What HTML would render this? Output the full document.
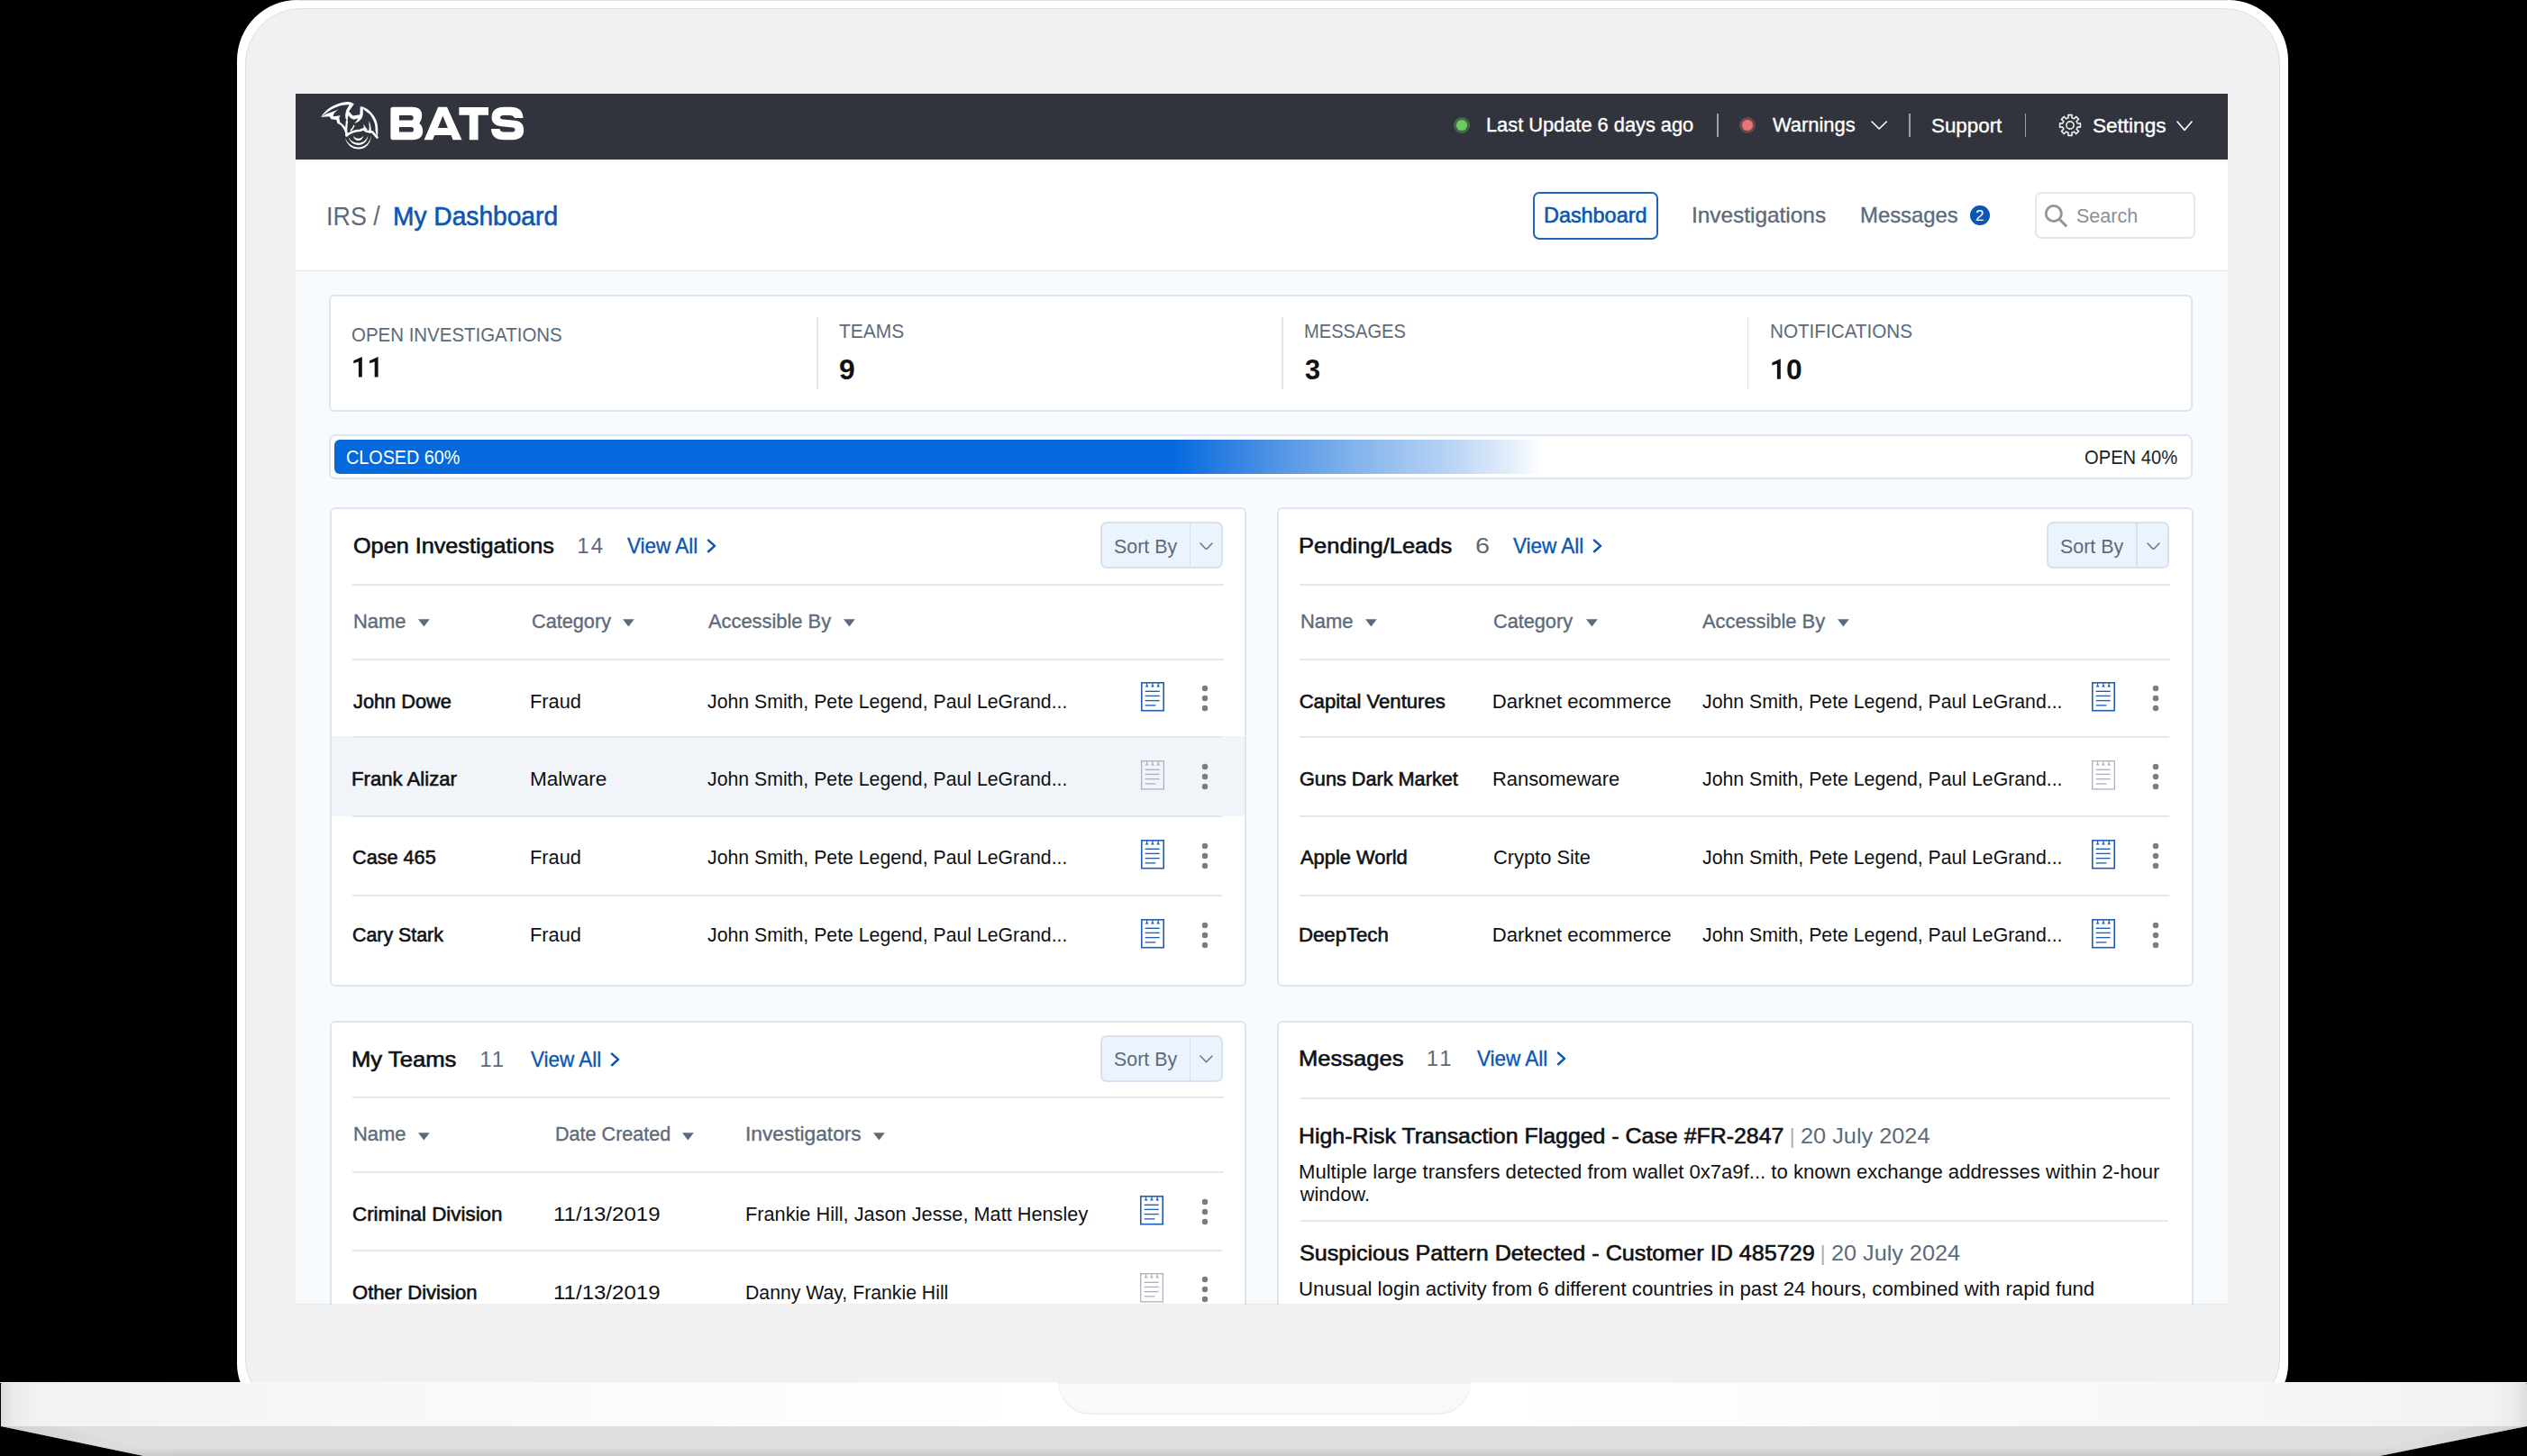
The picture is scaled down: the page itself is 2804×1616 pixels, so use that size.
<!DOCTYPE html>
<html><head><meta charset="utf-8"><title>BATS Dashboard</title>
<style>
html,body{margin:0;padding:0;background:#000;width:2804px;height:1616px;overflow:hidden;font-family:"Liberation Sans",sans-serif}
body{position:relative}
.a{position:absolute}
.t{position:absolute;white-space:pre;transform-origin:0 0;font-family:"Liberation Sans",sans-serif;font-weight:400}
</style></head><body>

<div class="a" style="left:263px;top:0px;width:2276px;height:1571px;background:#ffffff;border-radius:67px 67px 57px 57px"></div>
<div class="a" style="left:330px;top:0px;width:2142px;height:1px;background:#e0e0e0"></div>
<div class="a" style="left:272px;top:9px;width:2258px;height:1552px;box-sizing:border-box;background:#f1f1f1;border:1px solid #dedede;border-radius:62px 62px 52px 52px"></div>
<div class="a" style="left:1px;top:1534px;width:2803px;height:49px;background:linear-gradient(90deg,#dcdcdc 0%,#ebebeb 0.5%,#f2f2f2 1.4%,#f5f5f5 8%,#fbfbfb 25%,#ffffff 40%,#ffffff 60%,#fbfbfb 75%,#f5f5f5 92%,#f2f2f2 98.6%,#ebebeb 99.5%,#dcdcdc 100%);border-radius:3px 3px 0 0"></div>
<div class="a" style="left:0;top:1534px;width:2804px;height:1px;background:#fafafa"></div>
<svg class="a" style="left:0;top:1583px" width="2804" height="33" viewBox="0 0 2804 33"><defs><linearGradient id="bg1" x1="0" y1="0" x2="0" y2="1"><stop offset="0" stop-color="#dedede"/><stop offset="0.7" stop-color="#dfdfdf"/><stop offset="1" stop-color="#c9c9c9"/></linearGradient></defs><defs><linearGradient id="bgL" x1="0" y1="0" x2="1" y2="0"><stop offset="0" stop-color="#c4c4c4"/><stop offset="1" stop-color="#dedede" stop-opacity="0"/></linearGradient><linearGradient id="bgR" x1="1" y1="0" x2="0" y2="0"><stop offset="0" stop-color="#c4c4c4"/><stop offset="1" stop-color="#dedede" stop-opacity="0"/></linearGradient></defs><path d="M1 0 H2804 L2641 33 H159 Z" fill="url(#bg1)"/><path d="M1 0 L60 0 L200 33 L159 33 Z" fill="url(#bgL)" opacity="0.5"/><path d="M2804 0 L2744 0 L2604 33 L2641 33 Z" fill="url(#bgR)" opacity="0.5"/></svg>
<div class="a" style="left:1174px;top:1534px;width:458px;height:36px;background:#f9f9f9;border-radius:0 0 40px 40px;box-shadow:inset 0 -1px 2px rgba(0,0,0,0.08), inset 0 4px 3px -3px rgba(0,0,0,0.06)"></div>
<div class="a" style="left:0;top:0;width:2804px;height:1448px;overflow:hidden">
<div class="a" style="left:328px;top:104px;width:2144px;height:1344px;background:#f8fbfd"></div>
<div class="a" style="left:328px;top:104px;width:2144px;height:73px;background:#31343d"></div>
<div class="a" style="left:328px;top:177px;width:2144px;height:123px;background:#ffffff"></div>
<div class="a" style="left:328px;top:300px;width:2144px;height:1px;background:#dde5ef"></div>
<div class="a" style="left:328px;top:177px;width:2144px;height:1px;background:#e4e9f0"></div>
<svg class="a" style="left:328px;top:104px" width="300" height="73" viewBox="328 104 300 73">
<g fill="#ffffff">
<path d="M356.16,129.95 C361,122 370,114.5 385.25,113.0 C388.5,112.8 391,113.8 392.94,115.29 L387.65,116.25 C380,115.7 369.8,118.9 362.0,125.6 Z"/>
<path d="M356.16,129.95 L365.54,129.23 L367.46,132.36 L373.23,133.08 L374.43,136.92 L378.04,138.85 L380.92,142.45 C382.4,145 383.4,147.8 384.06,150.57 L386.2,148.8 C385,145.5 383.6,142.5 382.37,140.05 L377.08,135.24 L376.36,130.43 L377.8,128.27 L369.63,129.23 C369.8,127.6 370.4,125.8 371.8,124.5 C373,123.2 374.4,122 376.0,121.3 C373,122.6 368.8,124.3 362.6,126.3 Z"/>
<path d="M392.98,115.30 L387.21,123.54 L386.80,128.07 L385.98,130.55 L385.56,134.46 L383.92,132.61 C383.2,130.5 383,128.4 383.30,126.42 C383.6,124.5 384.1,122.8 384.74,121.27 L387.83,116.12 Z"/>
<path d="M387.21,123.54 L391.54,128.48 L399.37,127.25 L399.68,117.98 L402.87,120.65 L402.67,127.66 L401.43,131.16 L398.55,134.46 L393.39,137.35 L397.31,131.58 L395.66,131.78 L392.78,132.81 L388.86,130.96 L386.80,128.07 Z"/>
<path d="M399.68,117.98 C407,119 414,125 417.5,133.5 C419.5,139 419.8,145.5 418.8,152.7 L416.6,145.4 C416.6,141 416.2,138 415.2,135.5 C413.6,131.6 412,129 410,126.6 C407.8,124.5 405.4,123.2 402.87,120.65 Z"/>
<path d="M409.2,134.2 C410.9,137 411.7,140.5 412,145.8 L409.4,145.8 C409.8,141.5 409.7,137.6 409.2,134.2 Z"/>
<path d="M403.4,137.6 C404.8,140.2 406.2,142.4 408.2,144.2 L403.8,144.6 Z"/>
<path d="M391.9,150.8 C392.6,154.5 395,156 397.7,156 C400.6,156 402.8,154 403.3,150 C402.2,152.6 400.4,153.8 397.7,153.8 C395.2,153.8 393.2,152.8 391.9,150.8 Z"/>
<path d="M386.8,152.6 C388.4,158 392.4,161 397.7,161 C403.6,161 407.8,156.8 408.5,150 C407,155.2 403,158.6 397.7,158.8 C392.8,158.8 389.2,156.4 386.8,152.6 Z"/>
<path d="M383.0,153 C384.8,160.6 390.6,165.6 397.7,165.6 C405.8,165.6 411.6,159.4 412,150 C410.8,158 405,163.4 397.7,163.4 C391,163.4 385.6,159.4 383.0,153 Z"/>
</g>
<g fill="none" stroke="#ffffff" stroke-linecap="round" stroke-linejoin="round">
<path d="M384.9,134.5 C384.2,139.5 384,145 384.3,150.2" stroke-width="2.2"/>
<path d="M392.8,139.4 C392,141.6 391,143 389.4,144.6" stroke-width="1.5"/>
<path d="M384.5,150.4 C388.5,147 393,145.2 399.8,144.8 L403.5,143.2 L406.1,145.4 L410.8,146.6 L412.8,146.2 L418.6,152.6" stroke-width="2.6"/>
</g>
<g fill="#ffffff">
<path fill-rule="evenodd" d="M433.4,121.6 Q433.4,118.8 436.2,118.8 L457.6,118.8 C465.2,118.8 468.2,122.6 468.2,128 C468.2,132.4 466.4,135.6 465.2,137 C467.4,138.4 469.2,141.4 469.2,145.6 C469.2,152 465.2,155.2 457.8,155.2 L436.2,155.2 Q433.4,155.2 433.4,152.4 Z M442.9,127.9 L455.8,127.9 Q458.7,127.9 458.7,130.75 Q458.7,133.6 455.8,133.6 L442.9,133.6 Z M442.9,140.9 L456.1,140.9 Q459,140.9 459,143.75 Q459,146.6 456.1,146.6 L442.9,146.6 Z"/>
<path fill-rule="evenodd" d="M470.6,155.2 L486.2,118.8 L496,118.8 L512.5,155.2 L502.6,155.2 L500.6,150.1 L482.3,150.1 L480.1,155.2 Z M491.3,128.6 L485.9,141.9 L496.9,141.9 Z"/>
<path d="M509.4,119 L542,119 L542,127.7 L530.6,127.7 L530.6,155.3 L520.8,155.3 L520.8,127.7 L509.4,127.7 Z"/>
<path d="M580.5,131.1 L570.9,131.1 C570.2,128.8 568.4,127.9 565.2,127.9 L558.4,127.9 C556.2,127.9 555,128.9 555,130.2 C555,131.5 556,132.3 558.2,132.5 L571.2,133.8 C578,134.5 581.2,138.2 581.2,144.4 C581.2,151.6 576.8,155.3 566.2,155.3 L559.6,155.3 C549.6,155.3 545.2,150.8 545,143 L554.5,143 C554.9,145.4 556.4,146.4 559.2,146.4 L568.6,146.4 C570.6,146.4 571.5,145.5 571.5,144.1 C571.5,142.6 570.6,141.8 568.4,141.6 L556.2,140.3 C549.2,139.6 545.6,136 545.6,130.6 C545.6,123 550.4,118.8 559.4,118.8 L566,118.8 C575.8,118.8 580.3,122.8 580.5,131.1 Z"/>
</g></svg>
<div class="a" style="left:1612.8px;top:130px;width:18px;height:18px;border-radius:50%;background:rgba(108,203,95,0.35)"></div>
<div class="a" style="left:1615.8px;top:133px;width:12px;height:12px;border-radius:50%;background:#6ccb5f"></div>
<div class="a" style="left:1929.7px;top:130px;width:18px;height:18px;border-radius:50%;background:rgba(232,112,112,0.35)"></div>
<div class="a" style="left:1932.7px;top:133px;width:12px;height:12px;border-radius:50%;background:#e87676"></div>
<div class="a" style="left:1905.2px;top:126px;width:1.6px;height:25.5px;background:#9aa1ab"></div>
<div class="a" style="left:2118.2px;top:126px;width:1.6px;height:25.5px;background:#9aa1ab"></div>
<div class="a" style="left:2246.7px;top:126px;width:1.6px;height:25.5px;background:#9aa1ab"></div>
<svg class="a" style="left:2076.1px;top:133.8px" width="18.3" height="10.0" viewBox="0 0 18.3 10.0"><path d="M1 1 L9.15 9.0 L17.3 1" fill="none" stroke="#ffffff" stroke-width="1.6" stroke-linecap="round" stroke-linejoin="round"/></svg>
<svg class="a" style="left:2415.3px;top:133.6px" width="18.0" height="11.4" viewBox="0 0 18.0 11.4"><path d="M1 1 L9.0 10.4 L17.0 1" fill="none" stroke="#ffffff" stroke-width="1.6" stroke-linecap="round" stroke-linejoin="round"/></svg>
<svg class="a" style="left:2280px;top:122px" width="34" height="34" viewBox="0 0 34 34"><path d="M15.04,8.83 L14.89,5.59 L19.11,5.59 L18.96,8.83 L21.39,9.84 L23.57,7.44 L26.56,10.43 L24.16,12.61 L25.17,15.04 L28.41,14.89 L28.41,19.11 L25.17,18.96 L24.16,21.39 L26.56,23.57 L23.57,26.56 L21.39,24.16 L18.96,25.17 L19.11,28.41 L14.89,28.41 L15.04,25.17 L12.61,24.16 L10.43,26.56 L7.44,23.57 L9.84,21.39 L8.83,18.96 L5.59,19.11 L5.59,14.89 L8.83,15.04 L9.84,12.61 L7.44,10.43 L10.43,7.44 L12.61,9.84 Z" fill="none" stroke="#ececec" stroke-width="1.6" stroke-linejoin="round"/><circle cx="17.0" cy="17.0" r="4.1" fill="none" stroke="#ececec" stroke-width="1.6"/></svg>
<div class="a" style="left:1701px;top:213px;width:139px;height:52.5px;box-sizing:border-box;border:2px solid #1f63b8;border-radius:7px"></div>
<div class="a" style="left:2185.6px;top:228px;width:22px;height:22px;border-radius:50%;background:#0b56b3"></div>
<div class="a" style="left:2258.3px;top:213.2px;width:177.4px;height:52px;box-sizing:border-box;border:2px solid #e4e8ed;border-radius:7px;background:#fff"></div>
<svg class="a" style="left:2262px;top:220px" width="38" height="38" viewBox="0 0 38 38"><circle cx="16.8" cy="17" r="8.6" fill="none" stroke="#959595" stroke-width="2.8"/><path d="M23.2 23.4 L30.2 30.4" stroke="#959595" stroke-width="2.9" stroke-linecap="round"/></svg>
<div class="a" style="left:365px;top:326.5px;width:2068px;height:130px;box-sizing:border-box;background:#fff;border:2px solid #dce5f0;border-radius:6px"></div>
<div class="a" style="left:906.2px;top:351.5px;width:1.8px;height:80.3px;background:#e4e4e6"></div>
<div class="a" style="left:1422.4px;top:351.5px;width:1.8px;height:80.3px;background:#e4e4e6"></div>
<div class="a" style="left:1938.6px;top:351.5px;width:1.8px;height:80.3px;background:#e4e4e6"></div>
<div class="a" style="left:365px;top:482px;width:2068px;height:50px;box-sizing:border-box;background:#fff;border:2px solid #dce5f0;border-radius:7px"></div>
<div class="a" style="left:371px;top:488px;width:2056px;height:37.5px;border-radius:6px;background:linear-gradient(90deg,#0569de 0%,#0569de 45.3%,#4a90e4 50.3%,#80b2ec 54.9%,#bcd6f5 60.5%,#e4eefb 63.5%,rgba(255,255,255,0) 65.2%)"></div>
<div class="a" style="left:366px;top:563px;width:1017px;height:532px;box-sizing:border-box;background:#fff;border:2px solid #dce5f0;border-radius:6px"></div>
<div class="a" style="left:391.3px;top:647.8px;width:966.3px;height:2px;background:#e1e8f1"></div>
<div class="a" style="left:391.3px;top:731px;width:966.3px;height:2px;background:#e1e8f1"></div>
<div class="a" style="left:368px;top:817px;width:1013px;height:88.5px;background:#f1f5fa"></div>
<div class="a" style="left:391.3px;top:817px;width:964.5px;height:2px;background:#e1e8f1"></div>
<div class="a" style="left:391.3px;top:905px;width:964.5px;height:2px;background:#e1e8f1"></div>
<div class="a" style="left:391.3px;top:993px;width:964.5px;height:2px;background:#e1e8f1"></div>
<div class="a" style="left:1220.8px;top:579.3px;width:136px;height:52px;box-sizing:border-box;background:#ebf4fd;border:2px solid #d7e2ee;border-radius:7px"></div>
<div class="a" style="left:1319.8px;top:580.3px;width:1.5px;height:50px;background:#d7e2ee"></div>
<svg class="a" style="left:1331.0px;top:601.5px" width="15.0" height="8.8" viewBox="0 0 15.0 8.8"><path d="M1 1 L7.5 7.8 L14.0 1" fill="none" stroke="#6b7684" stroke-width="1.5" stroke-linecap="round" stroke-linejoin="round"/></svg>
<svg class="a" style="left:783.4px;top:598.2px" width="14" height="16" viewBox="0 0 14 16"><path d="M3 1.6 L10 7.9 L3 14.2" fill="none" stroke="#0b56b3" stroke-width="2.5" stroke-linecap="round" stroke-linejoin="round"/></svg>
<svg class="a" style="left:463.9px;top:687.2px" width="14" height="9" viewBox="0 0 14 9"><path d="M0 0.2 H12.8 L6.4 8.4 Z" fill="#5d6a7a"/></svg>
<svg class="a" style="left:691.4px;top:687.2px" width="14" height="9" viewBox="0 0 14 9"><path d="M0 0.2 H12.8 L6.4 8.4 Z" fill="#5d6a7a"/></svg>
<svg class="a" style="left:935.6px;top:687.2px" width="14" height="9" viewBox="0 0 14 9"><path d="M0 0.2 H12.8 L6.4 8.4 Z" fill="#5d6a7a"/></svg>
<svg class="a" style="left:1266.3px;top:757.35px" width="27" height="34" viewBox="0 0 27 34"><rect x="0.80" y="0.80" width="24.40" height="30.90" fill="none" stroke="#1f5fb5" stroke-width="1.6"/><path d="M6.6 0.5 V4.5" stroke="#1f5fb5" stroke-width="1.1"/><path d="M4.699999999999999 5.6 L6.6 2.6 L8.5 5.6 Z" fill="#1f5fb5"/><path d="M12.9 0.5 V4.5" stroke="#1f5fb5" stroke-width="1.1"/><path d="M11.0 5.6 L12.9 2.6 L14.8 5.6 Z" fill="#1f5fb5"/><path d="M19.2 0.5 V4.5" stroke="#1f5fb5" stroke-width="1.1"/><path d="M17.3 5.6 L19.2 2.6 L21.099999999999998 5.6 Z" fill="#1f5fb5"/><path d="M4.7 10.3 H20.7" stroke="#1f5fb5" stroke-width="1.35"/><path d="M4.7 15.4 H20.7" stroke="#1f5fb5" stroke-width="1.35"/><path d="M4.7 20.6 H20.7" stroke="#1f5fb5" stroke-width="1.35"/><path d="M4.7 25.9 H16.4" stroke="#1f5fb5" stroke-width="1.35"/></svg>
<svg class="a" style="left:1332.10px;top:759.40px" width="10" height="32" viewBox="0 0 10 32"><circle cx="5" cy="5" r="3.25" fill="#797e86"/><circle cx="5" cy="16" r="3.25" fill="#797e86"/><circle cx="5" cy="27" r="3.25" fill="#797e86"/></svg>
<svg class="a" style="left:1266.3px;top:844.3px" width="27" height="34" viewBox="0 0 27 34"><rect x="0.65" y="0.65" width="24.70" height="31.20" fill="none" stroke="#a9b2bd" stroke-width="1.3"/><path d="M6.6 0.5 V4.5" stroke="#a9b2bd" stroke-width="1.1"/><path d="M4.699999999999999 5.6 L6.6 2.6 L8.5 5.6 Z" fill="#a9b2bd"/><path d="M12.9 0.5 V4.5" stroke="#a9b2bd" stroke-width="1.1"/><path d="M11.0 5.6 L12.9 2.6 L14.8 5.6 Z" fill="#a9b2bd"/><path d="M19.2 0.5 V4.5" stroke="#a9b2bd" stroke-width="1.1"/><path d="M17.3 5.6 L19.2 2.6 L21.099999999999998 5.6 Z" fill="#a9b2bd"/><path d="M4.7 10.3 H20.7" stroke="#a9b2bd" stroke-width="1.35"/><path d="M4.7 15.4 H20.7" stroke="#a9b2bd" stroke-width="1.35"/><path d="M4.7 20.6 H20.7" stroke="#a9b2bd" stroke-width="1.35"/><path d="M4.7 25.9 H16.4" stroke="#a9b2bd" stroke-width="1.35"/></svg>
<svg class="a" style="left:1332.10px;top:846.35px" width="10" height="32" viewBox="0 0 10 32"><circle cx="5" cy="5" r="3.25" fill="#797e86"/><circle cx="5" cy="16" r="3.25" fill="#797e86"/><circle cx="5" cy="27" r="3.25" fill="#797e86"/></svg>
<svg class="a" style="left:1266.3px;top:932.25px" width="27" height="34" viewBox="0 0 27 34"><rect x="0.80" y="0.80" width="24.40" height="30.90" fill="none" stroke="#1f5fb5" stroke-width="1.6"/><path d="M6.6 0.5 V4.5" stroke="#1f5fb5" stroke-width="1.1"/><path d="M4.699999999999999 5.6 L6.6 2.6 L8.5 5.6 Z" fill="#1f5fb5"/><path d="M12.9 0.5 V4.5" stroke="#1f5fb5" stroke-width="1.1"/><path d="M11.0 5.6 L12.9 2.6 L14.8 5.6 Z" fill="#1f5fb5"/><path d="M19.2 0.5 V4.5" stroke="#1f5fb5" stroke-width="1.1"/><path d="M17.3 5.6 L19.2 2.6 L21.099999999999998 5.6 Z" fill="#1f5fb5"/><path d="M4.7 10.3 H20.7" stroke="#1f5fb5" stroke-width="1.35"/><path d="M4.7 15.4 H20.7" stroke="#1f5fb5" stroke-width="1.35"/><path d="M4.7 20.6 H20.7" stroke="#1f5fb5" stroke-width="1.35"/><path d="M4.7 25.9 H16.4" stroke="#1f5fb5" stroke-width="1.35"/></svg>
<svg class="a" style="left:1332.10px;top:934.30px" width="10" height="32" viewBox="0 0 10 32"><circle cx="5" cy="5" r="3.25" fill="#797e86"/><circle cx="5" cy="16" r="3.25" fill="#797e86"/><circle cx="5" cy="27" r="3.25" fill="#797e86"/></svg>
<svg class="a" style="left:1266.3px;top:1020.25px" width="27" height="34" viewBox="0 0 27 34"><rect x="0.80" y="0.80" width="24.40" height="30.90" fill="none" stroke="#1f5fb5" stroke-width="1.6"/><path d="M6.6 0.5 V4.5" stroke="#1f5fb5" stroke-width="1.1"/><path d="M4.699999999999999 5.6 L6.6 2.6 L8.5 5.6 Z" fill="#1f5fb5"/><path d="M12.9 0.5 V4.5" stroke="#1f5fb5" stroke-width="1.1"/><path d="M11.0 5.6 L12.9 2.6 L14.8 5.6 Z" fill="#1f5fb5"/><path d="M19.2 0.5 V4.5" stroke="#1f5fb5" stroke-width="1.1"/><path d="M17.3 5.6 L19.2 2.6 L21.099999999999998 5.6 Z" fill="#1f5fb5"/><path d="M4.7 10.3 H20.7" stroke="#1f5fb5" stroke-width="1.35"/><path d="M4.7 15.4 H20.7" stroke="#1f5fb5" stroke-width="1.35"/><path d="M4.7 20.6 H20.7" stroke="#1f5fb5" stroke-width="1.35"/><path d="M4.7 25.9 H16.4" stroke="#1f5fb5" stroke-width="1.35"/></svg>
<svg class="a" style="left:1332.10px;top:1022.30px" width="10" height="32" viewBox="0 0 10 32"><circle cx="5" cy="5" r="3.25" fill="#797e86"/><circle cx="5" cy="16" r="3.25" fill="#797e86"/><circle cx="5" cy="27" r="3.25" fill="#797e86"/></svg>
<div class="a" style="left:1417px;top:563px;width:1016.5px;height:532px;box-sizing:border-box;background:#fff;border:2px solid #dce5f0;border-radius:6px"></div>
<div class="a" style="left:1442px;top:647.8px;width:965.8000000000002px;height:2px;background:#e1e8f1"></div>
<div class="a" style="left:1442px;top:731px;width:965.8000000000002px;height:2px;background:#e1e8f1"></div>
<div class="a" style="left:1442px;top:817px;width:964.5px;height:2px;background:#e1e8f1"></div>
<div class="a" style="left:1442px;top:905px;width:964.5px;height:2px;background:#e1e8f1"></div>
<div class="a" style="left:1442px;top:993px;width:964.5px;height:2px;background:#e1e8f1"></div>
<div class="a" style="left:2271.4px;top:579.3px;width:136px;height:52px;box-sizing:border-box;background:#ebf4fd;border:2px solid #d7e2ee;border-radius:7px"></div>
<div class="a" style="left:2370.4px;top:580.3px;width:1.5px;height:50px;background:#d7e2ee"></div>
<svg class="a" style="left:2381.6px;top:601.5px" width="15.0" height="8.8" viewBox="0 0 15.0 8.8"><path d="M1 1 L7.5 7.8 L14.0 1" fill="none" stroke="#6b7684" stroke-width="1.5" stroke-linecap="round" stroke-linejoin="round"/></svg>
<svg class="a" style="left:1766.4px;top:598.2px" width="14" height="16" viewBox="0 0 14 16"><path d="M3 1.6 L10 7.9 L3 14.2" fill="none" stroke="#0b56b3" stroke-width="2.5" stroke-linecap="round" stroke-linejoin="round"/></svg>
<svg class="a" style="left:1514.6px;top:687.2px" width="14" height="9" viewBox="0 0 14 9"><path d="M0 0.2 H12.8 L6.4 8.4 Z" fill="#5d6a7a"/></svg>
<svg class="a" style="left:1759.6px;top:687.2px" width="14" height="9" viewBox="0 0 14 9"><path d="M0 0.2 H12.8 L6.4 8.4 Z" fill="#5d6a7a"/></svg>
<svg class="a" style="left:2039.0px;top:687.2px" width="14" height="9" viewBox="0 0 14 9"><path d="M0 0.2 H12.8 L6.4 8.4 Z" fill="#5d6a7a"/></svg>
<svg class="a" style="left:2321.2px;top:757.35px" width="27" height="34" viewBox="0 0 27 34"><rect x="0.80" y="0.80" width="24.40" height="30.90" fill="none" stroke="#1f5fb5" stroke-width="1.6"/><path d="M6.6 0.5 V4.5" stroke="#1f5fb5" stroke-width="1.1"/><path d="M4.699999999999999 5.6 L6.6 2.6 L8.5 5.6 Z" fill="#1f5fb5"/><path d="M12.9 0.5 V4.5" stroke="#1f5fb5" stroke-width="1.1"/><path d="M11.0 5.6 L12.9 2.6 L14.8 5.6 Z" fill="#1f5fb5"/><path d="M19.2 0.5 V4.5" stroke="#1f5fb5" stroke-width="1.1"/><path d="M17.3 5.6 L19.2 2.6 L21.099999999999998 5.6 Z" fill="#1f5fb5"/><path d="M4.7 10.3 H20.7" stroke="#1f5fb5" stroke-width="1.35"/><path d="M4.7 15.4 H20.7" stroke="#1f5fb5" stroke-width="1.35"/><path d="M4.7 20.6 H20.7" stroke="#1f5fb5" stroke-width="1.35"/><path d="M4.7 25.9 H16.4" stroke="#1f5fb5" stroke-width="1.35"/></svg>
<svg class="a" style="left:2387.40px;top:759.40px" width="10" height="32" viewBox="0 0 10 32"><circle cx="5" cy="5" r="3.25" fill="#797e86"/><circle cx="5" cy="16" r="3.25" fill="#797e86"/><circle cx="5" cy="27" r="3.25" fill="#797e86"/></svg>
<svg class="a" style="left:2321.2px;top:844.3px" width="27" height="34" viewBox="0 0 27 34"><rect x="0.65" y="0.65" width="24.70" height="31.20" fill="none" stroke="#a9b2bd" stroke-width="1.3"/><path d="M6.6 0.5 V4.5" stroke="#a9b2bd" stroke-width="1.1"/><path d="M4.699999999999999 5.6 L6.6 2.6 L8.5 5.6 Z" fill="#a9b2bd"/><path d="M12.9 0.5 V4.5" stroke="#a9b2bd" stroke-width="1.1"/><path d="M11.0 5.6 L12.9 2.6 L14.8 5.6 Z" fill="#a9b2bd"/><path d="M19.2 0.5 V4.5" stroke="#a9b2bd" stroke-width="1.1"/><path d="M17.3 5.6 L19.2 2.6 L21.099999999999998 5.6 Z" fill="#a9b2bd"/><path d="M4.7 10.3 H20.7" stroke="#a9b2bd" stroke-width="1.35"/><path d="M4.7 15.4 H20.7" stroke="#a9b2bd" stroke-width="1.35"/><path d="M4.7 20.6 H20.7" stroke="#a9b2bd" stroke-width="1.35"/><path d="M4.7 25.9 H16.4" stroke="#a9b2bd" stroke-width="1.35"/></svg>
<svg class="a" style="left:2387.40px;top:846.35px" width="10" height="32" viewBox="0 0 10 32"><circle cx="5" cy="5" r="3.25" fill="#797e86"/><circle cx="5" cy="16" r="3.25" fill="#797e86"/><circle cx="5" cy="27" r="3.25" fill="#797e86"/></svg>
<svg class="a" style="left:2321.2px;top:932.25px" width="27" height="34" viewBox="0 0 27 34"><rect x="0.80" y="0.80" width="24.40" height="30.90" fill="none" stroke="#1f5fb5" stroke-width="1.6"/><path d="M6.6 0.5 V4.5" stroke="#1f5fb5" stroke-width="1.1"/><path d="M4.699999999999999 5.6 L6.6 2.6 L8.5 5.6 Z" fill="#1f5fb5"/><path d="M12.9 0.5 V4.5" stroke="#1f5fb5" stroke-width="1.1"/><path d="M11.0 5.6 L12.9 2.6 L14.8 5.6 Z" fill="#1f5fb5"/><path d="M19.2 0.5 V4.5" stroke="#1f5fb5" stroke-width="1.1"/><path d="M17.3 5.6 L19.2 2.6 L21.099999999999998 5.6 Z" fill="#1f5fb5"/><path d="M4.7 10.3 H20.7" stroke="#1f5fb5" stroke-width="1.35"/><path d="M4.7 15.4 H20.7" stroke="#1f5fb5" stroke-width="1.35"/><path d="M4.7 20.6 H20.7" stroke="#1f5fb5" stroke-width="1.35"/><path d="M4.7 25.9 H16.4" stroke="#1f5fb5" stroke-width="1.35"/></svg>
<svg class="a" style="left:2387.40px;top:934.30px" width="10" height="32" viewBox="0 0 10 32"><circle cx="5" cy="5" r="3.25" fill="#797e86"/><circle cx="5" cy="16" r="3.25" fill="#797e86"/><circle cx="5" cy="27" r="3.25" fill="#797e86"/></svg>
<svg class="a" style="left:2321.2px;top:1020.25px" width="27" height="34" viewBox="0 0 27 34"><rect x="0.80" y="0.80" width="24.40" height="30.90" fill="none" stroke="#1f5fb5" stroke-width="1.6"/><path d="M6.6 0.5 V4.5" stroke="#1f5fb5" stroke-width="1.1"/><path d="M4.699999999999999 5.6 L6.6 2.6 L8.5 5.6 Z" fill="#1f5fb5"/><path d="M12.9 0.5 V4.5" stroke="#1f5fb5" stroke-width="1.1"/><path d="M11.0 5.6 L12.9 2.6 L14.8 5.6 Z" fill="#1f5fb5"/><path d="M19.2 0.5 V4.5" stroke="#1f5fb5" stroke-width="1.1"/><path d="M17.3 5.6 L19.2 2.6 L21.099999999999998 5.6 Z" fill="#1f5fb5"/><path d="M4.7 10.3 H20.7" stroke="#1f5fb5" stroke-width="1.35"/><path d="M4.7 15.4 H20.7" stroke="#1f5fb5" stroke-width="1.35"/><path d="M4.7 20.6 H20.7" stroke="#1f5fb5" stroke-width="1.35"/><path d="M4.7 25.9 H16.4" stroke="#1f5fb5" stroke-width="1.35"/></svg>
<svg class="a" style="left:2387.40px;top:1022.30px" width="10" height="32" viewBox="0 0 10 32"><circle cx="5" cy="5" r="3.25" fill="#797e86"/><circle cx="5" cy="16" r="3.25" fill="#797e86"/><circle cx="5" cy="27" r="3.25" fill="#797e86"/></svg>
<div class="a" style="left:366px;top:1132.5px;width:1017px;height:367.5px;box-sizing:border-box;background:#fff;border:2px solid #dce5f0;border-radius:6px"></div>
<div class="a" style="left:391.3px;top:1217.3px;width:966.3px;height:2px;background:#e1e8f1"></div>
<div class="a" style="left:391.3px;top:1300.3px;width:966.3px;height:2px;background:#e1e8f1"></div>
<div class="a" style="left:391.3px;top:1386.6px;width:964.5px;height:2px;background:#e1e8f1"></div>
<div class="a" style="left:1220.8px;top:1148.8px;width:136px;height:52px;box-sizing:border-box;background:#ebf4fd;border:2px solid #d7e2ee;border-radius:7px"></div>
<div class="a" style="left:1319.8px;top:1149.8px;width:1.5px;height:50px;background:#d7e2ee"></div>
<svg class="a" style="left:1331.0px;top:1171.0px" width="15.0" height="8.8" viewBox="0 0 15.0 8.8"><path d="M1 1 L7.5 7.8 L14.0 1" fill="none" stroke="#6b7684" stroke-width="1.5" stroke-linecap="round" stroke-linejoin="round"/></svg>
<svg class="a" style="left:675.5px;top:1167.7px" width="14" height="16" viewBox="0 0 14 16"><path d="M3 1.6 L10 7.9 L3 14.2" fill="none" stroke="#0b56b3" stroke-width="2.5" stroke-linecap="round" stroke-linejoin="round"/></svg>
<svg class="a" style="left:463.9px;top:1256.6px" width="14" height="9" viewBox="0 0 14 9"><path d="M0 0.2 H12.8 L6.4 8.4 Z" fill="#5d6a7a"/></svg>
<svg class="a" style="left:756.7px;top:1256.6px" width="14" height="9" viewBox="0 0 14 9"><path d="M0 0.2 H12.8 L6.4 8.4 Z" fill="#5d6a7a"/></svg>
<svg class="a" style="left:969.0px;top:1256.6px" width="14" height="9" viewBox="0 0 14 9"><path d="M0 0.2 H12.8 L6.4 8.4 Z" fill="#5d6a7a"/></svg>
<svg class="a" style="left:1265.3px;top:1326.65px" width="27" height="34" viewBox="0 0 27 34"><rect x="0.80" y="0.80" width="24.40" height="30.90" fill="none" stroke="#1f5fb5" stroke-width="1.6"/><path d="M6.6 0.5 V4.5" stroke="#1f5fb5" stroke-width="1.1"/><path d="M4.699999999999999 5.6 L6.6 2.6 L8.5 5.6 Z" fill="#1f5fb5"/><path d="M12.9 0.5 V4.5" stroke="#1f5fb5" stroke-width="1.1"/><path d="M11.0 5.6 L12.9 2.6 L14.8 5.6 Z" fill="#1f5fb5"/><path d="M19.2 0.5 V4.5" stroke="#1f5fb5" stroke-width="1.1"/><path d="M17.3 5.6 L19.2 2.6 L21.099999999999998 5.6 Z" fill="#1f5fb5"/><path d="M4.7 10.3 H20.7" stroke="#1f5fb5" stroke-width="1.35"/><path d="M4.7 15.4 H20.7" stroke="#1f5fb5" stroke-width="1.35"/><path d="M4.7 20.6 H20.7" stroke="#1f5fb5" stroke-width="1.35"/><path d="M4.7 25.9 H16.4" stroke="#1f5fb5" stroke-width="1.35"/></svg>
<svg class="a" style="left:1331.50px;top:1328.70px" width="10" height="32" viewBox="0 0 10 32"><circle cx="5" cy="5" r="3.25" fill="#797e86"/><circle cx="5" cy="16" r="3.25" fill="#797e86"/><circle cx="5" cy="27" r="3.25" fill="#797e86"/></svg>
<svg class="a" style="left:1265.3px;top:1413.05px" width="27" height="34" viewBox="0 0 27 34"><rect x="0.65" y="0.65" width="24.70" height="31.20" fill="none" stroke="#a9b2bd" stroke-width="1.3"/><path d="M6.6 0.5 V4.5" stroke="#a9b2bd" stroke-width="1.1"/><path d="M4.699999999999999 5.6 L6.6 2.6 L8.5 5.6 Z" fill="#a9b2bd"/><path d="M12.9 0.5 V4.5" stroke="#a9b2bd" stroke-width="1.1"/><path d="M11.0 5.6 L12.9 2.6 L14.8 5.6 Z" fill="#a9b2bd"/><path d="M19.2 0.5 V4.5" stroke="#a9b2bd" stroke-width="1.1"/><path d="M17.3 5.6 L19.2 2.6 L21.099999999999998 5.6 Z" fill="#a9b2bd"/><path d="M4.7 10.3 H20.7" stroke="#a9b2bd" stroke-width="1.35"/><path d="M4.7 15.4 H20.7" stroke="#a9b2bd" stroke-width="1.35"/><path d="M4.7 20.6 H20.7" stroke="#a9b2bd" stroke-width="1.35"/><path d="M4.7 25.9 H16.4" stroke="#a9b2bd" stroke-width="1.35"/></svg>
<svg class="a" style="left:1331.50px;top:1415.10px" width="10" height="32" viewBox="0 0 10 32"><circle cx="5" cy="5" r="3.25" fill="#797e86"/><circle cx="5" cy="16" r="3.25" fill="#797e86"/><circle cx="5" cy="27" r="3.25" fill="#797e86"/></svg>
<div class="a" style="left:1417px;top:1132.5px;width:1016.5px;height:367.5px;box-sizing:border-box;background:#fff;border:2px solid #dce5f0;border-radius:6px"></div>
<div class="a" style="left:1442.5px;top:1217.5px;width:965.0px;height:2px;background:#e1e8f1"></div>
<div class="a" style="left:1442.5px;top:1354.2px;width:963.6999999999998px;height:2px;background:#e1e8f1"></div>
<svg class="a" style="left:1726.3px;top:1167.2px" width="14" height="16" viewBox="0 0 14 16"><path d="M3 1.6 L10 7.9 L3 14.2" fill="none" stroke="#0b56b3" stroke-width="2.5" stroke-linecap="round" stroke-linejoin="round"/></svg>
<div class="a" style="left:328px;top:1447px;width:2144px;height:1px;background:rgba(0,0,0,0.06)"></div>
<svg class="a" style="left:0;top:0;overflow:visible" width="1" height="1"><path transform="translate(0,0)" d="M392.3,400.2 L401.8,396 L401.8,418.4 L397.9,418.4 L397.9,401.4 L392.3,403.2 Z" fill="#101114"/></svg>
<svg class="a" style="left:0;top:0;overflow:visible" width="1" height="1"><path transform="translate(17.8,0)" d="M392.3,400.2 L401.8,396 L401.8,418.4 L397.9,418.4 L397.9,401.4 L392.3,403.2 Z" fill="#101114"/></svg>
<svg class="a" style="left:0;top:0;overflow:visible" width="1" height="1"><path transform="translate(1574.0,2.3)" d="M392.3,400.2 L401.8,396 L401.8,418.4 L397.9,418.4 L397.9,401.4 L392.3,403.2 Z" fill="#101114"/></svg>
<span class="t" style="left:1649.01px;top:128.20px;font-size:22px;line-height:22px;color:#ffffff;-webkit-text-stroke:0.35px #ffffff;transform:scaleX(0.9907);">Last Update 6 days ago</span>
<span class="t" style="left:1967.00px;top:128.20px;font-size:22px;line-height:22px;color:#ffffff;-webkit-text-stroke:0.35px #ffffff;transform:scaleX(0.9945);">Warnings</span>
<span class="t" style="left:2142.74px;top:128.50px;font-size:22px;line-height:22px;color:#ffffff;-webkit-text-stroke:0.35px #ffffff;transform:scaleX(1.0164);">Support</span>
<span class="t" style="left:2322.03px;top:128.50px;font-size:22px;line-height:22px;color:#ffffff;-webkit-text-stroke:0.35px #ffffff;transform:scaleX(1.0249);">Settings</span>
<span class="t" style="left:362.29px;top:224.50px;font-size:29.5px;line-height:29.5px;color:#5d6a7a;transform:scaleX(0.9116);">IRS /</span>
<span class="t" style="left:436.49px;top:224.50px;font-size:29.5px;line-height:29.5px;color:#0b56b3;-webkit-text-stroke:0.6px #0b56b3;transform:scaleX(0.9541);">My Dashboard</span>
<span class="t" style="left:1712.69px;top:227.40px;font-size:24px;line-height:24px;color:#0b56b3;-webkit-text-stroke:0.6px #0b56b3;transform:scaleX(0.9747);">Dashboard</span>
<span class="t" style="left:1877.37px;top:227.40px;font-size:24px;line-height:24px;color:#5d6a7a;-webkit-text-stroke:0.35px #5d6a7a;transform:scaleX(1.0160);">Investigations</span>
<span class="t" style="left:2063.86px;top:227.40px;font-size:24px;line-height:24px;color:#5d6a7a;-webkit-text-stroke:0.35px #5d6a7a;transform:scaleX(0.9944);">Messages</span>
<span class="t" style="left:2304.31px;top:229.00px;font-size:21.7px;line-height:21.7px;color:#8b9098;transform:scaleX(0.9925);">Search</span>
<span class="t" style="left:390.18px;top:360.80px;font-size:22.2px;line-height:22.2px;color:#5d6a7a;transform:scaleX(0.9219);">OPEN INVESTIGATIONS</span>
<span class="t" style="left:931.43px;top:356.80px;font-size:22.2px;line-height:22.2px;color:#5d6a7a;transform:scaleX(0.9467);">TEAMS</span>
<span class="t" style="left:931.38px;top:394.50px;font-size:31.3px;line-height:31.3px;color:#101114;font-weight:700;transform:scaleX(1.0164);">9</span>
<span class="t" style="left:1447.31px;top:356.80px;font-size:22.2px;line-height:22.2px;color:#5d6a7a;transform:scaleX(0.9068);">MESSAGES</span>
<span class="t" style="left:1447.96px;top:394.50px;font-size:31.3px;line-height:31.3px;color:#101114;font-weight:700;transform:scaleX(0.9806);">3</span>
<span class="t" style="left:1964.07px;top:356.80px;font-size:22.2px;line-height:22.2px;color:#5d6a7a;transform:scaleX(0.9311);">NOTIFICATIONS</span>
<span class="t" style="left:1982.03px;top:394.70px;font-size:31.3px;line-height:31.3px;color:#101114;font-weight:700;transform:scaleX(1.0133);">0</span>
<span class="t" style="left:383.59px;top:496.70px;font-size:21.7px;line-height:21.7px;color:#ffffff;transform:scaleX(0.9117);">CLOSED 60%</span>
<span class="t" style="left:2312.77px;top:496.70px;font-size:21.7px;line-height:21.7px;color:#222222;transform:scaleX(0.9300);">OPEN 40%</span>
<span class="t" style="left:391.51px;top:593.90px;font-size:24px;line-height:24px;color:#101114;-webkit-text-stroke:0.6px #101114;transform:scaleX(1.0505);">Open Investigations</span>
<span class="t" style="left:640.25px;top:593.90px;font-size:24px;line-height:24px;color:#5d6a7a;letter-spacing:2.05px;">14</span>
<span class="t" style="left:696.40px;top:593.90px;font-size:24px;line-height:24px;color:#0b56b3;-webkit-text-stroke:0.35px #0b56b3;transform:scaleX(0.9374);">View All</span>
<span class="t" style="left:1235.71px;top:595.50px;font-size:21.7px;line-height:21.7px;color:#5d6a7a;transform:scaleX(0.9857);">Sort By</span>
<span class="t" style="left:392.11px;top:678.80px;font-size:22.1px;line-height:22.1px;color:#5d6a7a;-webkit-text-stroke:0.35px #5d6a7a;transform:scaleX(0.9938);">Name</span>
<span class="t" style="left:589.52px;top:678.80px;font-size:22.1px;line-height:22.1px;color:#5d6a7a;-webkit-text-stroke:0.35px #5d6a7a;transform:scaleX(0.9814);">Category</span>
<span class="t" style="left:785.95px;top:678.80px;font-size:22.1px;line-height:22.1px;color:#5d6a7a;-webkit-text-stroke:0.35px #5d6a7a;transform:scaleX(0.9899);">Accessible By</span>
<span class="t" style="left:391.80px;top:767.90px;font-size:22.1px;line-height:22.1px;color:#101114;-webkit-text-stroke:0.6px #101114;transform:scaleX(0.9855);">John Dowe</span>
<span class="t" style="left:588.27px;top:767.90px;font-size:22.1px;line-height:22.1px;color:#101114;transform:scaleX(0.9872);">Fraud</span>
<span class="t" style="left:785.06px;top:767.90px;font-size:22.1px;line-height:22.1px;color:#101114;transform:scaleX(0.9620);">John Smith, Pete Legend, Paul LeGrand...</span>
<span class="t" style="left:390.30px;top:854.30px;font-size:22.1px;line-height:22.1px;color:#101114;-webkit-text-stroke:0.6px #101114;transform:scaleX(1.0030);">Frank Alizar</span>
<span class="t" style="left:588.21px;top:854.30px;font-size:22.1px;line-height:22.1px;color:#101114;transform:scaleX(1.0217);">Malware</span>
<span class="t" style="left:785.06px;top:854.30px;font-size:22.1px;line-height:22.1px;color:#101114;transform:scaleX(0.9620);">John Smith, Pete Legend, Paul LeGrand...</span>
<span class="t" style="left:391.06px;top:940.70px;font-size:22.1px;line-height:22.1px;color:#101114;-webkit-text-stroke:0.6px #101114;transform:scaleX(0.9802);">Case 465</span>
<span class="t" style="left:588.27px;top:940.70px;font-size:22.1px;line-height:22.1px;color:#101114;transform:scaleX(0.9872);">Fraud</span>
<span class="t" style="left:785.06px;top:940.70px;font-size:22.1px;line-height:22.1px;color:#101114;transform:scaleX(0.9620);">John Smith, Pete Legend, Paul LeGrand...</span>
<span class="t" style="left:391.07px;top:1027.10px;font-size:22.1px;line-height:22.1px;color:#101114;-webkit-text-stroke:0.6px #101114;transform:scaleX(0.9669);">Cary Stark</span>
<span class="t" style="left:588.27px;top:1027.10px;font-size:22.1px;line-height:22.1px;color:#101114;transform:scaleX(0.9872);">Fraud</span>
<span class="t" style="left:785.06px;top:1027.10px;font-size:22.1px;line-height:22.1px;color:#101114;transform:scaleX(0.9620);">John Smith, Pete Legend, Paul LeGrand...</span>
<span class="t" style="left:1440.94px;top:593.90px;font-size:24px;line-height:24px;color:#101114;-webkit-text-stroke:0.6px #101114;transform:scaleX(1.0631);">Pending/Leads</span>
<span class="t" style="left:1637.30px;top:593.90px;font-size:24px;line-height:24px;color:#5d6a7a;transform:scaleX(1.2000);">6</span>
<span class="t" style="left:1679.40px;top:593.90px;font-size:24px;line-height:24px;color:#0b56b3;-webkit-text-stroke:0.35px #0b56b3;transform:scaleX(0.9374);">View All</span>
<span class="t" style="left:2286.31px;top:595.50px;font-size:21.7px;line-height:21.7px;color:#5d6a7a;transform:scaleX(0.9857);">Sort By</span>
<span class="t" style="left:1442.71px;top:678.80px;font-size:22.1px;line-height:22.1px;color:#5d6a7a;-webkit-text-stroke:0.35px #5d6a7a;transform:scaleX(0.9938);">Name</span>
<span class="t" style="left:1657.22px;top:678.80px;font-size:22.1px;line-height:22.1px;color:#5d6a7a;-webkit-text-stroke:0.35px #5d6a7a;transform:scaleX(0.9814);">Category</span>
<span class="t" style="left:1889.25px;top:678.80px;font-size:22.1px;line-height:22.1px;color:#5d6a7a;-webkit-text-stroke:0.35px #5d6a7a;transform:scaleX(0.9899);">Accessible By</span>
<span class="t" style="left:1441.65px;top:767.90px;font-size:22.1px;line-height:22.1px;color:#101114;-webkit-text-stroke:0.6px #101114;">Capital Ventures</span>
<span class="t" style="left:1655.75px;top:767.90px;font-size:22.1px;line-height:22.1px;color:#101114;">Darknet ecommerce</span>
<span class="t" style="left:1888.76px;top:767.90px;font-size:22.1px;line-height:22.1px;color:#101114;transform:scaleX(0.9622);">John Smith, Pete Legend, Paul LeGrand...</span>
<span class="t" style="left:1441.66px;top:854.30px;font-size:22.1px;line-height:22.1px;color:#101114;-webkit-text-stroke:0.6px #101114;transform:scaleX(0.9807);">Guns Dark Market</span>
<span class="t" style="left:1655.77px;top:854.30px;font-size:22.1px;line-height:22.1px;color:#101114;transform:scaleX(0.9911);">Ransomeware</span>
<span class="t" style="left:1888.76px;top:854.30px;font-size:22.1px;line-height:22.1px;color:#101114;transform:scaleX(0.9622);">John Smith, Pete Legend, Paul LeGrand...</span>
<span class="t" style="left:1442.65px;top:940.70px;font-size:22.1px;line-height:22.1px;color:#101114;-webkit-text-stroke:0.6px #101114;transform:scaleX(0.9904);">Apple World</span>
<span class="t" style="left:1656.51px;top:940.70px;font-size:22.1px;line-height:22.1px;color:#101114;transform:scaleX(0.9883);">Crypto Site</span>
<span class="t" style="left:1888.76px;top:940.70px;font-size:22.1px;line-height:22.1px;color:#101114;transform:scaleX(0.9622);">John Smith, Pete Legend, Paul LeGrand...</span>
<span class="t" style="left:1440.90px;top:1027.10px;font-size:22.1px;line-height:22.1px;color:#101114;-webkit-text-stroke:0.6px #101114;transform:scaleX(1.0026);">DeepTech</span>
<span class="t" style="left:1655.75px;top:1027.10px;font-size:22.1px;line-height:22.1px;color:#101114;">Darknet ecommerce</span>
<span class="t" style="left:1888.76px;top:1027.10px;font-size:22.1px;line-height:22.1px;color:#101114;transform:scaleX(0.9622);">John Smith, Pete Legend, Paul LeGrand...</span>
<span class="t" style="left:390.43px;top:1163.70px;font-size:24px;line-height:24px;color:#101114;-webkit-text-stroke:0.6px #101114;transform:scaleX(1.0689);">My Teams</span>
<span class="t" style="left:532.25px;top:1163.70px;font-size:24px;line-height:24px;color:#5d6a7a;letter-spacing:1.90px;">11</span>
<span class="t" style="left:588.50px;top:1163.70px;font-size:24px;line-height:24px;color:#0b56b3;-webkit-text-stroke:0.35px #0b56b3;transform:scaleX(0.9374);">View All</span>
<span class="t" style="left:1235.71px;top:1165.00px;font-size:21.7px;line-height:21.7px;color:#5d6a7a;transform:scaleX(0.9857);">Sort By</span>
<span class="t" style="left:392.11px;top:1248.20px;font-size:22.1px;line-height:22.1px;color:#5d6a7a;-webkit-text-stroke:0.35px #5d6a7a;transform:scaleX(0.9938);">Name</span>
<span class="t" style="left:615.74px;top:1248.20px;font-size:22.1px;line-height:22.1px;color:#5d6a7a;-webkit-text-stroke:0.35px #5d6a7a;transform:scaleX(0.9763);">Date Created</span>
<span class="t" style="left:827.20px;top:1248.20px;font-size:22.1px;line-height:22.1px;color:#5d6a7a;-webkit-text-stroke:0.35px #5d6a7a;transform:scaleX(1.0276);">Investigators</span>
<span class="t" style="left:391.24px;top:1337.30px;font-size:22.1px;line-height:22.1px;color:#101114;-webkit-text-stroke:0.6px #101114;transform:scaleX(1.0120);">Criminal Division</span>
<span class="t" style="left:614.10px;top:1337.30px;font-size:22.1px;line-height:22.1px;color:#101114;transform:scaleX(1.0880);">11/13/2019</span>
<span class="t" style="left:826.78px;top:1337.30px;font-size:22.1px;line-height:22.1px;color:#101114;transform:scaleX(0.9831);">Frankie Hill, Jason Jesse, Matt Hensley</span>
<span class="t" style="left:391.25px;top:1423.50px;font-size:22.1px;line-height:22.1px;color:#101114;-webkit-text-stroke:0.6px #101114;transform:scaleX(0.9978);">Other Division</span>
<span class="t" style="left:614.10px;top:1423.50px;font-size:22.1px;line-height:22.1px;color:#101114;transform:scaleX(1.0880);">11/13/2019</span>
<span class="t" style="left:827.02px;top:1423.50px;font-size:22.1px;line-height:22.1px;color:#101114;transform:scaleX(0.9609);">Danny Way, Frankie Hill</span>
<span class="t" style="left:1440.94px;top:1163.20px;font-size:24px;line-height:24px;color:#101114;-webkit-text-stroke:0.6px #101114;transform:scaleX(1.0645);">Messages</span>
<span class="t" style="left:1582.65px;top:1163.20px;font-size:24px;line-height:24px;color:#5d6a7a;letter-spacing:3.00px;">11</span>
<span class="t" style="left:1639.30px;top:1163.20px;font-size:24px;line-height:24px;color:#0b56b3;-webkit-text-stroke:0.35px #0b56b3;transform:scaleX(0.9374);">View All</span>
<span class="t" style="left:1440.98px;top:1248.70px;font-size:24px;line-height:24px;color:#101114;-webkit-text-stroke:0.6px #101114;transform:scaleX(1.0375);">High-Risk Transaction Flagged - Case #FR-2847</span>
<span class="t" style="left:1985.50px;top:1248.70px;font-size:24px;line-height:24px;color:#a9b1bb;">|</span>
<span class="t" style="left:1997.88px;top:1248.70px;font-size:24px;line-height:24px;color:#5d6a7a;transform:scaleX(1.0540);">20 July 2024</span>
<span class="t" style="left:1441.02px;top:1290.40px;font-size:21.7px;line-height:21.7px;color:#101114;transform:scaleX(1.0187);">Multiple large transfers detected from wallet 0x7a9f... to known exchange addresses within 2-hour</span>
<span class="t" style="left:1442.80px;top:1314.80px;font-size:21.7px;line-height:21.7px;color:#101114;">window.</span>
<span class="t" style="left:1442.01px;top:1378.60px;font-size:24px;line-height:24px;color:#101114;-webkit-text-stroke:0.6px #101114;transform:scaleX(1.0478);">Suspicious Pattern Detected - Customer ID 485729</span>
<span class="t" style="left:2019.50px;top:1378.60px;font-size:24px;line-height:24px;color:#a9b1bb;">|</span>
<span class="t" style="left:2031.69px;top:1378.60px;font-size:24px;line-height:24px;color:#5d6a7a;transform:scaleX(1.0503);">20 July 2024</span>
<span class="t" style="left:1441.01px;top:1419.60px;font-size:21.7px;line-height:21.7px;color:#101114;transform:scaleX(1.0237);">Unusual login activity from 6 different countries in past 24 hours, combined with rapid fund</span>
<span class="t" style="left:2192.20px;top:231.80px;font-size:16px;line-height:16px;color:#ffffff;transform:scaleX(1.0621);">2</span>
</div>
</body></html>
